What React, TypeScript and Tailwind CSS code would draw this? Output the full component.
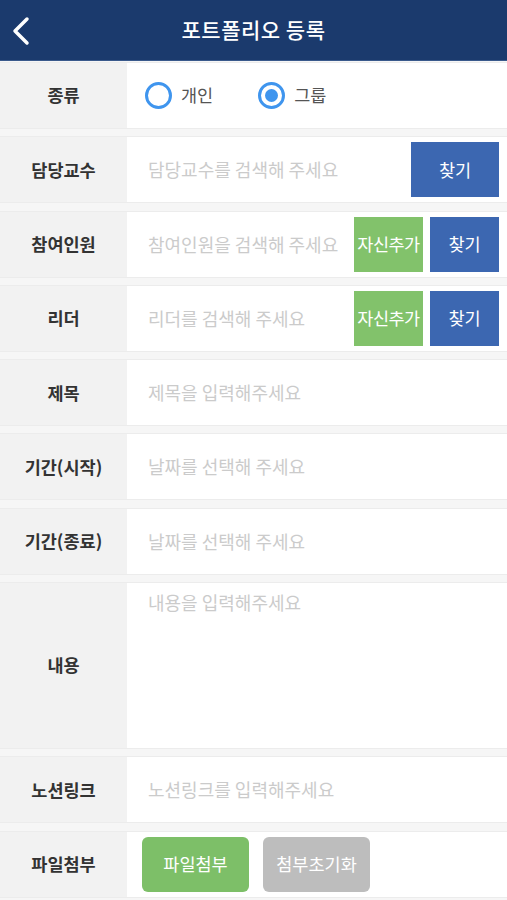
import type { ReactNode } from "react";

const font = { fontFamily: '"Noto Sans CJK KR", "Noto Sans", sans-serif' };

function Row({ label, children, tall }: { label: string; children: ReactNode; tall?: boolean }) {
  return (
    <div
      className={`flex w-full border-y border-[#ececec] bg-white ${tall ? "h-[167px]" : "h-[67px]"}`}
    >
      <div className="w-[127px] shrink-0 bg-[#f2f2f2] flex items-center justify-center text-[17.5px] font-bold text-[#333]">
        {label}
      </div>
      <div className="flex-1 flex items-center min-w-0">{children}</div>
    </div>
  );
}

function Placeholder({ text }: { text: string }) {
  return <span className="pl-[21px] text-[18px] text-[#cbcbcb] flex-1">{text}</span>;
}

function Radio({ checked, label }: { checked?: boolean; label: string }) {
  return (
    <div className="flex items-center">
      <span className="w-[27px] h-[27px] rounded-full border-[3px] border-[#3f95ee] flex items-center justify-center">
        {checked && <span className="w-[13px] h-[13px] rounded-full bg-[#3f95ee]" />}
      </span>
      <span className="ml-[9px] text-[17.5px] text-[#555]">{label}</span>
    </div>
  );
}

function FindButton() {
  return (
    <div className="w-[69px] h-[55px] bg-[#3c67b1] text-white text-[17.5px] flex items-center justify-center">
      찾기
    </div>
  );
}

function SelfButton() {
  return (
    <div className="w-[69px] h-[55px] bg-[#82c26b] text-white text-[17.5px] flex items-center justify-center tracking-[-0.5px] whitespace-nowrap">
      자신추가
    </div>
  );
}

export default function App() {
  return (
    <div className="w-[507px] h-[900px] bg-[#f6f6f6] overflow-hidden" style={font}>
      {/* Header */}
      <header className="h-[61px] bg-[#1b3a6d] flex items-center justify-center relative border-b border-[#3a5a8c]">
        <svg
          className="absolute left-[10px] top-[16px]"
          width="22"
          height="30"
          viewBox="0 0 22 30"
          fill="none"
          stroke="white"
          strokeWidth="3.5"
          strokeLinecap="round"
          strokeLinejoin="round"
        >
          <path d="M17 3 L5 15 L17 27" />
        </svg>
        <h1 className="text-white text-[21px] font-medium tracking-[0.5px]">포트폴리오 등록</h1>
      </header>

      <div className="flex flex-col gap-[7.3px] pt-[1px]">
        <Row label="종류">
          <div className="flex items-center pl-[18px] gap-[45px]">
            <Radio label="개인" />
            <Radio checked label="그룹" />
          </div>
        </Row>

        <Row label="담당교수">
          <Placeholder text="담당교수를 검색해 주세요" />
          <div className="pr-[8px] flex">
            <div className="w-[88px] h-[55px] bg-[#3c67b1] text-white text-[17.5px] flex items-center justify-center">
              찾기
            </div>
          </div>
        </Row>

        <Row label="참여인원">
          <Placeholder text="참여인원을 검색해 주세요" />
          <div className="flex gap-[7px] pr-[8px]">
            <SelfButton />
            <FindButton />
          </div>
        </Row>

        <Row label="리더">
          <Placeholder text="리더를 검색해 주세요" />
          <div className="flex gap-[7px] pr-[8px]">
            <SelfButton />
            <FindButton />
          </div>
        </Row>

        <Row label="제목">
          <Placeholder text="제목을 입력해주세요" />
        </Row>

        <Row label="기간(시작)">
          <Placeholder text="날짜를 선택해 주세요" />
        </Row>

        <Row label="기간(종료)">
          <Placeholder text="날짜를 선택해 주세요" />
        </Row>

        <Row label="내용" tall>
          <div className="self-start pt-[6px] pl-[21px] text-[18px] text-[#cbcbcb]">내용을 입력해주세요</div>
        </Row>

        <Row label="노션링크">
          <Placeholder text="노션링크를 입력해주세요" />
        </Row>

        <Row label="파일첨부">
          <div className="flex gap-[14px] pl-[15px]">
            <div className="w-[107px] h-[55px] rounded-[6px] bg-[#7dbf68] text-white text-[17.5px] flex items-center justify-center">
              파일첨부
            </div>
            <div className="w-[107px] h-[55px] rounded-[6px] bg-[#bdbdbd] text-white text-[17.5px] flex items-center justify-center">
              첨부초기화
            </div>
          </div>
        </Row>
      </div>
    </div>
  );
}
